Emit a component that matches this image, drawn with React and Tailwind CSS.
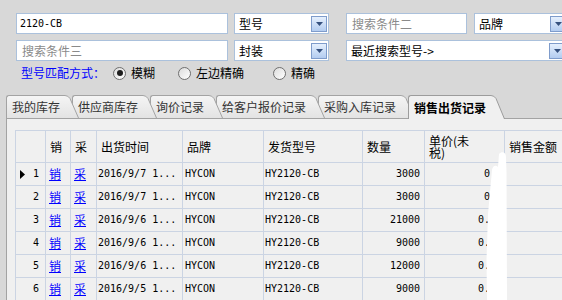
import React from 'react';

const mono = "font-['DejaVu_Sans_Mono',monospace] text-[10px]";

const rows = [
  { n: 1, time: '2016/9/7 1...', qty: '3000', price: '0', current: true },
  { n: 2, time: '2016/9/7 1...', qty: '3000', price: '0' },
  { n: 3, time: '2016/9/6 1...', qty: '21000', price: '0.' },
  { n: 4, time: '2016/9/6 1...', qty: '9000', price: '0.' },
  { n: 5, time: '2016/9/6 1...', qty: '12000', price: '0.' },
  { n: 6, time: '2016/9/5 1...', qty: '9000', price: '0.' },
];

const tabs = ['我的库存', '供应商库存', '询价记录', '给客户报价记录', '采购入库记录', '销售出货记录'];

const DropButton = () => (
  <div className="mr-px flex h-[16px] w-[16px] shrink-0 items-center justify-center border border-[#7f9ccb] bg-linear-to-b from-[#e6f0fd] to-[#b3ccf0]">
    <svg width="7" height="4" viewBox="0 0 7 4">
      <path d="M0 0H7L3.5 4Z" fill="#35507e" />
    </svg>
  </div>
);

const TextBox = ({ width, text, placeholder }) => (
  <div
    className="flex h-[21px] shrink-0 items-center border border-[#abc1dc] bg-white pl-[3px]"
    style={{ width }}
  >
    {text ? (
      <span className={mono + ' text-black'}>{text}</span>
    ) : (
      <span className="pl-[2px] text-[#8a8a8a]">{placeholder}</span>
    )}
  </div>
);

const Combo = ({ width, text }) => (
  <div
    className="flex h-[21px] shrink-0 items-center border border-[#abc1dc] bg-white pl-[4px]"
    style={{ width }}
  >
    <span className="flex-1 text-black">{text}</span>
    <DropButton />
  </div>
);

const Radio = ({ checked, label, className }) => (
  <div className={'flex items-center ' + className}>
    <span className="flex h-[13px] w-[13px] items-center justify-center rounded-full border border-[#6f6f6f] bg-linear-to-br from-[#dcdcdc] to-white">
      {checked && <span className="h-[6px] w-[6px] rounded-full bg-[#1e1e1e]" />}
    </span>
    <span className="ml-[5px] text-black">{label}</span>
  </div>
);

const Tab = ({ label, selected, z }) => (
  <div className="relative -mr-[7px] flex items-start" style={{ zIndex: z }}>
    <div
      className={
        selected
          ? 'flex h-[24px] items-center rounded-tl-[3px] border-l border-t border-[#9c9c9c] bg-[#f0f0f0] pl-[5px] pr-px font-bold text-black'
          : 'flex h-[23px] items-center rounded-tl-[3px] border-l border-t border-[#a3a3a3] bg-linear-to-b from-[#f5f5f5] to-[#e3e3e3] pl-[5px] pr-px text-[#333333]'
      }
    >
      {label}
    </div>
    <svg width="18" height={selected ? 24 : 23} viewBox={selected ? '0 0 18 24' : '0 0 18 23'} className="block shrink-0">
      <defs>
        <linearGradient id="tabfill" x1="0" y1="0" x2="0" y2="1">
          <stop offset="0" stopColor="#f5f5f5" />
          <stop offset="1" stopColor="#e3e3e3" />
        </linearGradient>
      </defs>
      {selected ? (
        <>
          <path d="M0 0.5H4Q7 0.5 9 3.5L17 23V24H0Z" fill="#f0f0f0" />
          <path d="M0 0.5H4Q7 0.5 9 3.5L17.5 24" fill="none" stroke="#9c9c9c" />
        </>
      ) : (
        <>
          <path d="M0 0.5H4Q7 0.5 9 3.5L17.5 23H0Z" fill="url(#tabfill)" />
          <path d="M0 0.5H4Q7 0.5 9 3.5L17.5 23" fill="none" stroke="#a3a3a3" />
        </>
      )}
    </svg>
  </div>
);

const Head = ({ children, className = '' }) => (
  <div className={'flex h-[31px] items-center bg-[#f0f0f0] pl-[4px] text-black ' + className}>{children}</div>
);

const Cell = ({ children, className = '' }) => (
  <div className={'flex h-[22px] items-center bg-[#f0f0f0] text-black ' + className}>{children}</div>
);

export default function App() {
  return (
    <div className="relative h-[300px] w-[562px] overflow-hidden bg-[#d8d8d8] font-['Noto_Sans_CJK_SC',sans-serif] text-[12px] leading-[14px]">
      <div className="pl-[16px] pt-[13px]">
        <div className="flex">
          <TextBox width={212} text="2120-CB" />
          <div className="ml-[6px]">
            <Combo width={95} text="型号" />
          </div>
          <div className="ml-[17px]">
            <TextBox width={121} placeholder="搜索条件二" />
          </div>
          <div className="ml-[7px]">
            <Combo width={94} text="品牌" />
          </div>
        </div>
        <div className="mt-[6px] flex">
          <TextBox width={212} placeholder="搜索条件三" />
          <div className="ml-[6px]">
            <Combo width={95} text="封装" />
          </div>
          <div className="ml-[17px]">
            <Combo width={221} text="最近搜索型号->" />
          </div>
        </div>
        <div className="mt-[5px] flex h-[14px] items-center pl-[5px]">
          <span className="w-[84px] text-[#0000ff]">型号匹配方式：</span>
          <Radio checked label="模糊" className="ml-[8px]" />
          <Radio label="左边精确" className="ml-[23px]" />
          <Radio label="精确" className="ml-[29px]" />
        </div>
      </div>

      <div className="ml-[6px] mt-[15px]">
        <div className="relative z-10 flex h-[23px] items-start">
          {tabs.map((t, i) => (
            <Tab key={t} label={t} selected={i === tabs.length - 1} z={i === tabs.length - 1 ? 20 : 10 - i} />
          ))}
        </div>
        <div className="h-[200px] border-l border-t border-[#a3a3a3] bg-[#f0f0f0] pl-[8px] pt-[11px]">
          <div className="grid w-[600px] grid-cols-[29px_24px_25px_85px_80px_98px_61px_79px_120px] gap-px bg-[#cbd4e3] p-px">
            <Head />
            <Head>销</Head>
            <Head className="pl-[3px]">采</Head>
            <Head className="pl-[3px]">出货时间</Head>
            <Head>品牌</Head>
            <Head className="pl-[3px]">发货型号</Head>
            <Head>数量</Head>
            <Head>
              <div className="flex flex-col">
                <div className="h-[12px] leading-[12px]">单价(未</div>
                <div className="h-[12px] leading-[12px]">税)</div>
              </div>
            </Head>
            <Head>销售金额</Head>

            {rows.map((r) => (
              <React.Fragment key={r.n}>
                <Cell className="justify-end pr-[6px]">
                  {r.current && (
                    <svg width="5" height="9" viewBox="0 0 5 9" className="mr-[8px]">
                      <path d="M0 0L5 4.5L0 9Z" fill="#000" />
                    </svg>
                  )}
                  <span className={mono}>{r.n}</span>
                </Cell>
                <Cell className={'pl-[3px] ' + (r.current ? 'bg-[#3399ff]' : '')}>
                  <span className="text-[#0000ff] underline">销</span>
                </Cell>
                <Cell className="pl-[3px]">
                  <span className="text-[#0000ff] underline">采</span>
                </Cell>
                <Cell className={'pl-[1px] ' + mono}>{r.time}</Cell>
                <Cell className={'pl-[2px] ' + mono}>HYCON</Cell>
                <Cell className={'pl-[1px] ' + mono}>HY2120-CB</Cell>
                <Cell className={'justify-end pr-[4px] ' + mono}>{r.qty}</Cell>
                <Cell className={'justify-end pr-[14px] ' + mono}>{r.price}</Cell>
                <Cell />
              </React.Fragment>
            ))}
          </div>
        </div>
      </div>

      <svg
        className="absolute left-[482px] top-[150px] blur-[0.5px]"
        width="28"
        height="150"
        viewBox="0 0 28 150"
      >
        <path d="M17 4C20 1 24 2 24 7L24.5 22L25 150L5 150L4.5 110L6 64L10 20C11 15 14 15 16 17Z" fill="#ffffff" />
      </svg>
    </div>
  );
}
